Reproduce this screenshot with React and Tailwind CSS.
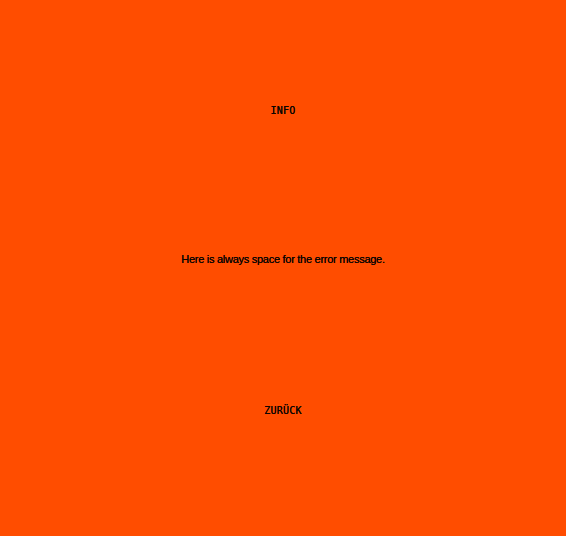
import React from 'react';

const App = () => {
  return (
    <div className="min-h-screen w-full bg-[#ff4d00] text-[#0d0500] flex flex-col items-center pt-[104px]">
      <h1 className="font-['DejaVu_Sans_Mono',monospace] text-[10px] leading-[14px] tracking-[0.02em] [text-shadow:0_0_0.4px_#0d0500]">
        INFO
      </h1>
      <p className="mt-[134px] font-['Liberation_Sans',Arial,sans-serif] text-[11px] leading-[14px] tracking-[-0.025em] [text-shadow:0_0_0.4px_#0d0500]">
        Here is always space for the error message.
      </p>
      <button className="mt-[138px] font-['DejaVu_Sans_Mono',monospace] text-[10px] leading-[14px] tracking-[0.02em] uppercase [text-shadow:0_0_0.4px_#0d0500]">
        Zurück
      </button>
    </div>
  );
};

export default App;
